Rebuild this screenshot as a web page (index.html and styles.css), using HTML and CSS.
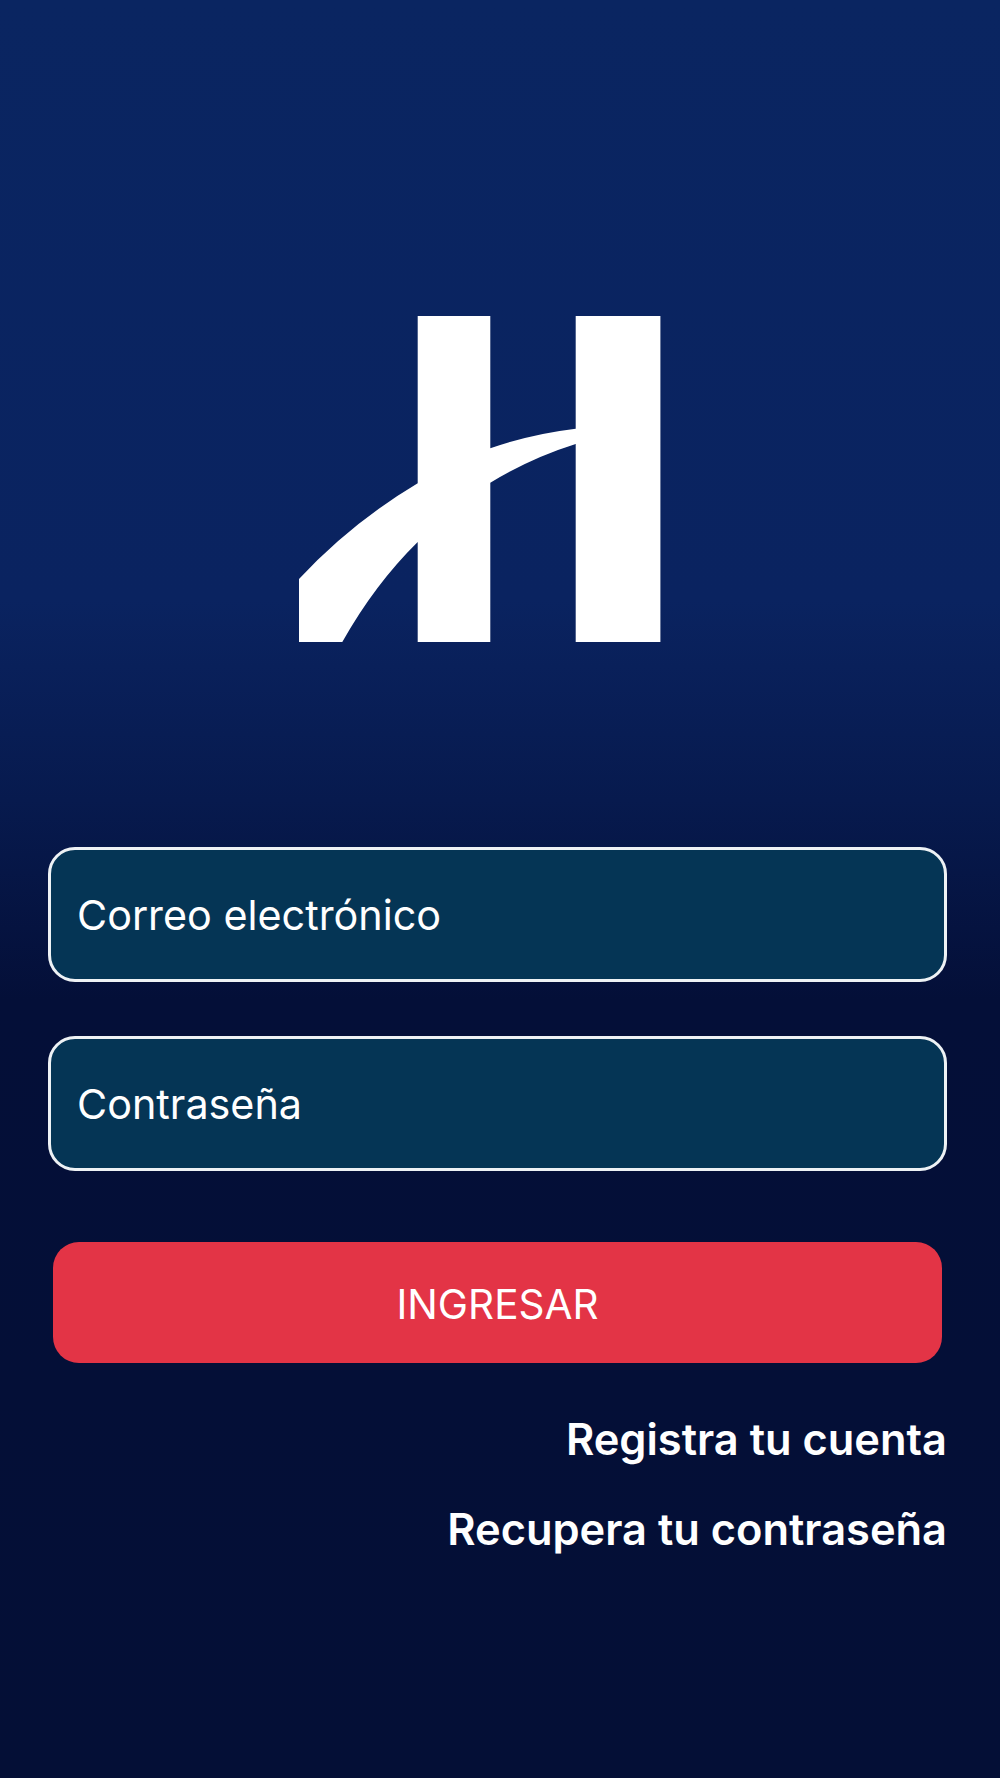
FILE: index.html

```html
<!DOCTYPE html>
<html lang="es">
<head>
<meta http-equiv="Content-Type" content="text/html; charset=UTF-8">
<meta name="viewport" content="width=device-width, initial-scale=1.0">
<title>Ingresar</title>
<link rel="stylesheet" href="styles.css">
</head>
<body>
<main class="login">
    <svg class="logo" viewBox="0 0 362 326" aria-label="Logo">
        <path fill="#fff" d="M118.7 0H191.3V132.3Q232 118 276.7 112.7V0H361.4V326H276.7V128Q232 142 191.3 166.7V326H118.7V226Q76 268 43.3 326H0V263Q52 207 118.7 167.3Z"/>
    </svg>
    <form class="login-form">
        <input class="field" type="email" placeholder="Correo electrónico">
        <input class="field" type="password" placeholder="Contraseña">
        <button class="submit" type="button">INGRESAR</button>
    </form>
    <nav class="links">
        <a href="#">Registra tu cuenta</a>
        <a href="#">Recupera tu contraseña</a>
    </nav>
</main>
</body>
</html>
```

FILE: styles.css

```css
html, body {
    margin: 0;
    height: 100%;
}
body {
    font-family: Inter, "Noto Sans", sans-serif;
    color: #fff;
    background: linear-gradient(#0a2561 0, #0a2360 600px, #071a4e 800px, #040f38 1000px, #040f36 100%);
}
.login {
    display: flex;
    flex-direction: column;
    padding: 316px 53px 0 48px;
}
.logo {
    display: block;
    width: 362px;
    height: 326px;
    margin-left: 251px;
}
.login-form {
    display: flex;
    flex-direction: column;
    margin-top: 205px;
}
.field {
    box-sizing: border-box;
    width: 100%;
    height: 135px;
    margin-bottom: 54px;
    padding: 0 26px;
    border: 3px solid #eef2f5;
    border-radius: 27px;
    background: #053555;
    color: #fff;
    font-family: inherit;
    font-size: 41.3px;
    outline: none;
}
.field::placeholder {
    color: #fff;
    opacity: 1;
}
.submit {
    height: 121px;
    margin: 17px 5px 0;
    padding: 4px 0 0;
    border: 0;
    border-radius: 26px;
    background: #e33446;
    color: #fff;
    font-family: inherit;
    font-size: 40.5px;
}
.links {
    display: flex;
    flex-direction: column;
    align-items: flex-end;
    gap: 38px;
    margin-top: 50px;
}
.links a {
    color: #fff;
    font-size: 43.4px;
    font-weight: 600;
    line-height: 52px;
    text-decoration: none;
}
```
